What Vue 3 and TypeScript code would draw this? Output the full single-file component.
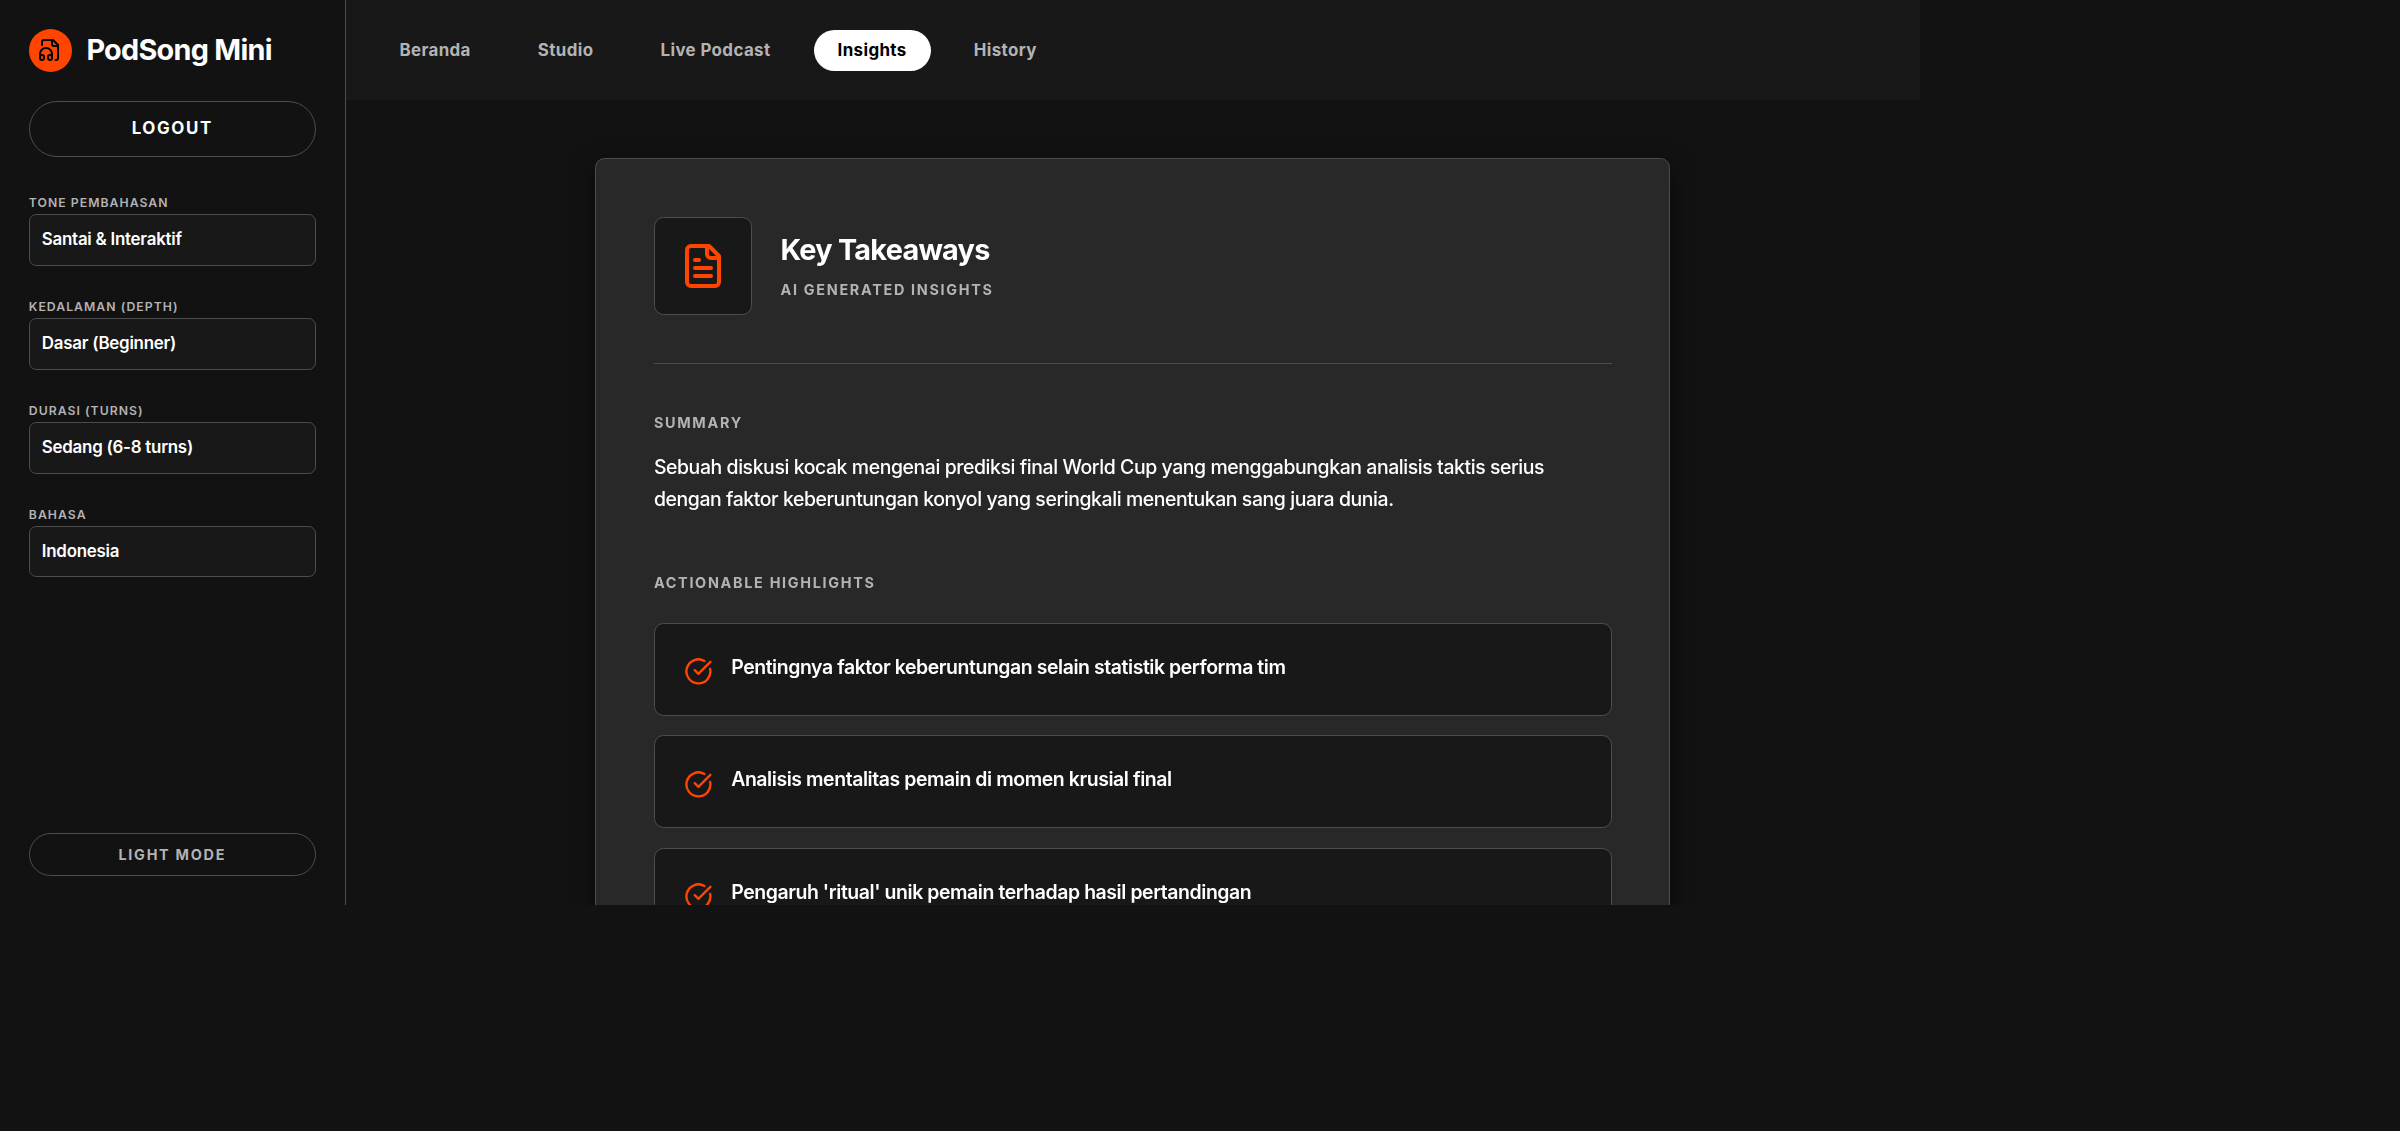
<script setup lang="ts">
interface Setting {
  label: string
  value: string
}

const settings: Setting[] = [
  { label: 'Tone Pembahasan', value: 'Santai & Interaktif' },
  { label: 'Kedalaman (Depth)', value: 'Dasar (Beginner)' },
  { label: 'Durasi (Turns)', value: 'Sedang (6-8 turns)' },
  { label: 'Bahasa', value: 'Indonesia' },
]

const tabs: string[] = ['Beranda', 'Studio', 'Live Podcast', 'Insights', 'History']
const activeTab = 'Insights'

const summary =
  'Sebuah diskusi kocak mengenai prediksi final World Cup yang menggabungkan analisis taktis serius dengan faktor keberuntungan konyol yang seringkali menentukan sang juara dunia.'

const highlights: string[] = [
  'Pentingnya faktor keberuntungan selain statistik performa tim',
  'Analisis mentalitas pemain di momen krusial final',
  "Pengaruh 'ritual' unik pemain terhadap hasil pertandingan",
]
</script>

<template>
  <div class="app">
    <aside class="sidebar">
      <div class="brand">
        <span class="brand-mark">
          <svg width="24" height="24" viewBox="0 0 24 24" fill="none" stroke="currentColor" stroke-width="2" stroke-linecap="round" stroke-linejoin="round">
            <path d="M4 7V4a2 2 0 0 1 2-2h9l5 5v13a2 2 0 0 1-2 2h-.5" />
            <path d="M14 2v4a2 2 0 0 0 2 2h4" />
            <path d="M2 19a2 2 0 1 1 4 0v1a2 2 0 1 1-4 0v-4a6 6 0 0 1 12 0v4a2 2 0 1 1-4 0v-1a2 2 0 1 1 4 0" />
          </svg>
        </span>
        <span class="brand-name">PodSong Mini</span>
      </div>

      <button class="logout" type="button">LOGOUT</button>

      <div class="settings">
        <div v-for="s in settings" :key="s.label" class="field">
          <span class="field-label">{{ s.label }}</span>
          <div class="field-value">{{ s.value }}</div>
        </div>
      </div>

      <button class="theme" type="button">LIGHT MODE</button>
    </aside>

    <div class="main">
      <nav class="topbar">
        <a v-for="t in tabs" :key="t" class="tab" :class="{ active: t === activeTab }">{{ t }}</a>
      </nav>

      <main class="content">
        <article class="card">
          <header class="card-head">
            <div class="card-icon">
              <svg width="48" height="48" viewBox="0 0 24 24" fill="none" stroke="currentColor" stroke-width="2" stroke-linecap="round" stroke-linejoin="round">
                <path d="M15 2H6a2 2 0 0 0-2 2v16a2 2 0 0 0 2 2h12a2 2 0 0 0 2-2V7Z" />
                <path d="M14 2v4a2 2 0 0 0 2 2h4" />
                <path d="M10 9H8" />
                <path d="M16 13H8" />
                <path d="M16 17H8" />
              </svg>
            </div>
            <div>
              <h2 class="card-title">Key Takeaways</h2>
              <p class="eyebrow">AI Generated Insights</p>
            </div>
          </header>

          <h3 class="eyebrow">Summary</h3>
          <p class="summary">{{ summary }}</p>

          <h3 class="eyebrow">Actionable Highlights</h3>
          <ul class="highlights">
            <li v-for="h in highlights" :key="h" class="highlight">
              <svg class="check" width="28.8" height="28.8" viewBox="0 0 24 24" fill="none" stroke="currentColor" stroke-width="2" stroke-linecap="round" stroke-linejoin="round">
                <path d="M21.801 10A10 10 0 1 1 17 3.335" />
                <path d="m9 11 3 3L22 4" />
              </svg>
              <span>{{ h }}</span>
            </li>
          </ul>
        </article>
      </main>
    </div>
  </div>
</template>

<style>
html,
body {
  background: #121212;
}
</style>

<style scoped>
.app {
  --surface: #181818;
  --line: #4d4d4d;
  --muted: #b3b3b3;
  --accent: #ff4500;
  display: flex;
  width: 1920px;
  height: 905px;
  overflow: hidden;
  background: #121212;
  color: #fff;
  font-family: 'Inter', sans-serif;
}

.app * {
  box-sizing: border-box;
}

.sidebar {
  display: flex;
  flex-direction: column;
  flex: none;
  width: 345.6px;
  height: 904.8px;
  padding: 28.8px;
  border-right: 1px solid var(--line);
}

.brand {
  display: flex;
  align-items: center;
  gap: 14.4px;
  height: 43.2px;
}

.brand-mark {
  display: flex;
  align-items: center;
  justify-content: center;
  width: 43.2px;
  height: 43.2px;
  border-radius: 50%;
  background: var(--accent);
  color: #000;
}

.brand-name {
  font-size: 28.8px;
  font-weight: 700;
  letter-spacing: -0.025em;
  line-height: 1.2;
  white-space: nowrap;
}

button {
  flex: none;
  font-family: inherit;
  font-weight: 700;
  letter-spacing: 0.12em;
  background: transparent;
  border: 1px solid var(--line);
  border-radius: 999px;
}

.logout {
  height: 55.9px;
  margin-top: 28.8px;
  padding: 0 0 1px;
  color: #fff;
  font-size: 16.9px;
  letter-spacing: 1.65px;
}

.theme {
  height: 43.2px;
  margin-top: auto;
  padding: 0;
  color: var(--muted);
  font-size: 14.4px;
}

.settings {
  display: flex;
  flex-direction: column;
  gap: 34.1px;
  margin-top: 39.6px;
}

.field-label {
  display: block;
  height: 14.8px;
  margin-bottom: 3.4px;
  color: var(--muted);
  font-size: 12.24px;
  font-weight: 600;
  letter-spacing: 0.084em;
  line-height: 14.8px;
  text-transform: uppercase;
}

.field-value {
  height: 51.5px;
  padding: 0 12px;
  border: 1px solid var(--line);
  border-radius: 7.2px;
  background: var(--surface);
  font-size: 16.9px;
  font-weight: 600;
  letter-spacing: -0.24px;
  line-height: 48px;
}

.main {
  display: flex;
  flex: 1;
  flex-direction: column;
  min-width: 0;
}

.topbar {
  display: flex;
  flex: none;
  align-items: center;
  gap: 19px;
  height: 100.4px;
  padding: 0 29.8px;
  background: var(--surface);
}

.tab {
  padding: 0 24px;
  border-radius: 999px;
  color: var(--muted);
  font-size: 16.9px;
  font-weight: 700;
  letter-spacing: 0.39px;
  line-height: 41px;
}

.tab.active {
  background: #fff;
  color: #000;
}

.content {
  flex: 1;
  min-height: 0;
  padding-top: 57.9px;
  overflow: hidden;
}

.card {
  width: 1075px;
  margin: 0 auto;
  padding: 57.9px 57px 57.9px 57.9px;
  border: 1px solid var(--line);
  border-radius: 9.6px;
  background: #282828;
  box-shadow: 0 8px 24px rgba(0, 0, 0, 0.5);
  will-change: transform;
}

.card-head {
  display: flex;
  align-items: center;
  gap: 28.6px;
  margin-bottom: 50px;
  padding-bottom: 48.1px;
  border-bottom: 1px solid var(--line);
}

.card-icon {
  display: flex;
  align-items: center;
  justify-content: center;
  width: 98px;
  height: 98px;
  border: 1px solid var(--line);
  border-radius: 9.6px;
  background: var(--surface);
  color: var(--accent);
}

.card-title {
  margin: 0 0 14px;
  font-size: 28.8px;
  font-weight: 700;
  letter-spacing: -0.72px;
  line-height: 34.6px;
}

.eyebrow {
  margin: 0;
  color: var(--muted);
  font-size: 14.4px;
  font-weight: 700;
  letter-spacing: 1.7px;
  line-height: 17.4px;
  text-transform: uppercase;
}

.summary {
  margin: 19.4px 0 59.2px;
  font-size: 19.44px;
  font-weight: 500;
  letter-spacing: -0.42px;
  line-height: 32.08px;
}

.highlights {
  display: flex;
  flex-direction: column;
  gap: 19.5px;
  margin: 31.4px 0 0;
  padding: 0;
  list-style: none;
}

.highlight {
  display: flex;
  align-items: flex-start;
  gap: 18.2px;
  height: 92.9px;
  padding: 28.8px 29.3px;
  border: 1px solid var(--line);
  border-radius: 9.6px;
  background: var(--surface);
  font-size: 19.44px;
  font-weight: 600;
  letter-spacing: -0.022em;
  line-height: 28px;
}

.check {
  flex: none;
  margin-top: 4.4px;
  color: var(--accent);
}
</style>
